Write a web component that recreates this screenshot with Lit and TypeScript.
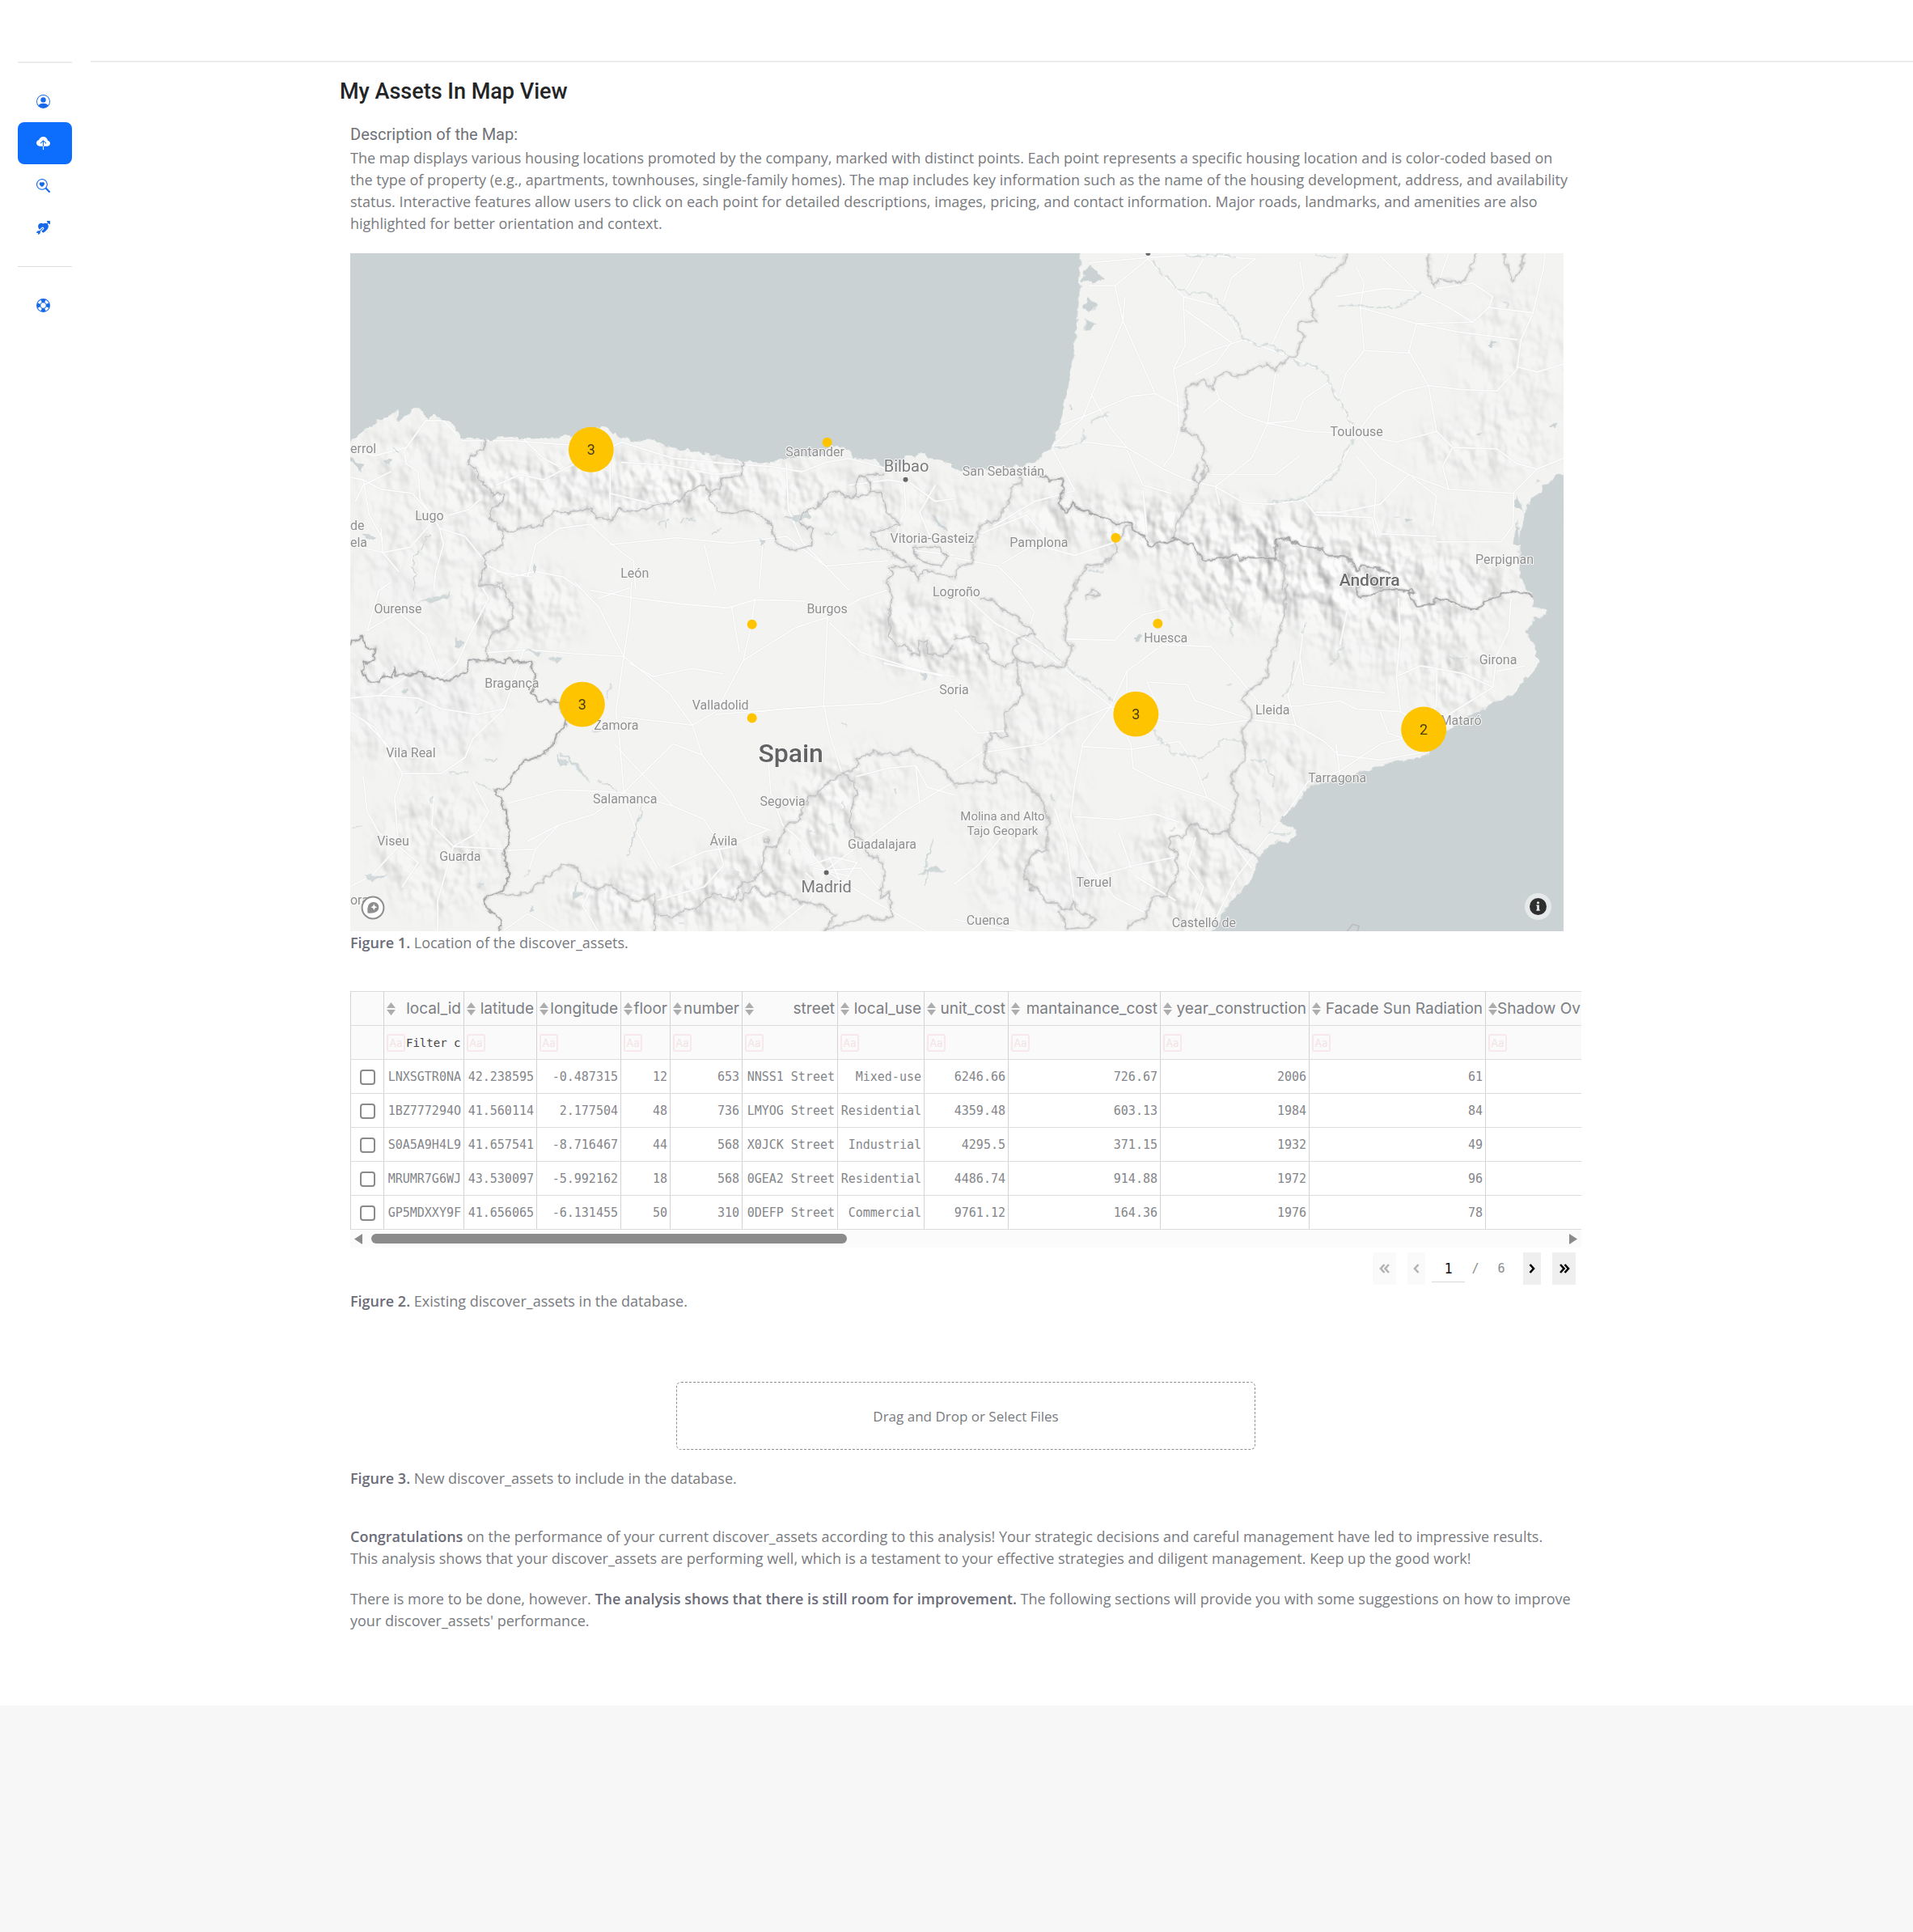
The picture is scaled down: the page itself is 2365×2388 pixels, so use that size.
import { LitElement, html, svg, css } from "lit";
import { customElement, property, state } from "lit/decorators.js";

/* ---------- icons ---------- */

const icons: Record<string, string[]> = {
  person: [
    "M11 6a3 3 0 1 1-6 0 3 3 0 0 1 6 0",
    "M0 8a8 8 0 1 1 16 0A8 8 0 0 1 0 8m8-7a7 7 0 0 0-5.468 11.37C3.242 11.226 4.805 10 8 10s4.757 1.225 5.468 2.37A7 7 0 0 0 8 1",
  ],
  upload: [
    "M8 0a5.53 5.53 0 0 0-3.594 1.342c-.766.66-1.321 1.52-1.464 2.383C1.266 4.095 0 5.555 0 7.318 0 9.366 1.708 11 3.781 11H7.5V5.707L5.354 7.854a.5.5 0 1 1-.708-.708l3-3a.5.5 0 0 1 .708 0l3 3a.5.5 0 0 1-.708.708L8.5 5.707V11h4.188C14.502 11 16 9.57 16 7.773c0-1.636-1.242-2.969-2.834-3.194C12.923 1.999 10.69 0 8 0",
    "M7.5 11h1v3.9a.5.5 0 0 1-1 0z",
  ],
  search: [
    "M6.5 4.482c1.664-1.673 5.825 1.254 0 5.018-5.825-3.764-1.664-6.69 0-5.018",
    "M13 6.5a6.47 6.47 0 0 1-1.258 3.844q.06.044.115.098l3.85 3.85a1 1 0 0 1-1.414 1.415l-3.85-3.85a1 1 0 0 1-.1-.115h.002A6.5 6.5 0 1 1 13 6.5M6.5 12a5.5 5.5 0 1 0 0-11 5.5 5.5 0 0 0 0 11",
  ],
  heart: [
    "M2.854 15.854A.5.5 0 0 1 2 15.5V14H.5a.5.5 0 0 1-.354-.854l1.5-1.5A.5.5 0 0 1 2 11.5h1.793l3.103-3.104a.5.5 0 1 1 .708.708L4.5 12.207V14a.5.5 0 0 1-.146.354zM16 3.5a.5.5 0 0 1-.854.354L14 2.707l-1.006 1.006c.236.248.44.531.6.845.562 1.096.585 2.517-.213 4.092-.793 1.563-2.395 3.288-5.105 5.08L8 13.912l-.276-.182A24 24 0 0 1 5.8 12.323L8.31 9.81a1.5 1.5 0 0 0-2.122-2.122L3.657 10.22a9 9 0 0 1-1.039-1.57c-.798-1.576-.775-2.997-.213-4.093C3.426 2.565 6.18 1.809 8 3.233c1.25-.98 2.944-.928 4.212-.152L13.292 2 12.147.854A.5.5 0 0 1 12.5 0h3a.5.5 0 0 1 .5.5z",
  ],
  help: [
    "M16 8A8 8 0 1 1 0 8a8 8 0 0 1 16 0M14.43 10.772l-2.788-1.115a4 4 0 0 1-1.985 1.985l1.115 2.788a7.03 7.03 0 0 0 3.658-3.658M5.228 14.43l1.115-2.788a4 4 0 0 1-1.985-1.985L1.57 10.772a7.03 7.03 0 0 0 3.658 3.658M14.43 5.228a7.03 7.03 0 0 0-3.658-3.658L9.657 4.358a4 4 0 0 1 1.985 1.985zM5.228 1.57A7.03 7.03 0 0 0 1.57 5.228l2.788 1.115a4 4 0 0 1 1.985-1.985zM8 11a3 3 0 1 0 0-6 3 3 0 0 0 0 6",
  ],
};

@customElement("side-nav")
class SideNav extends LitElement {
  @property() active = "upload";

  static styles = css`
    :host { display: block; box-sizing: border-box; padding: 76px 0 0 22px; }
    .rule { height: 2px; width: 67px; background: #ededee; }
    .thin { height: 1px; width: 67px; background: #dcdcde; }
    .group { display: flex; flex-direction: column; width: 67px; padding: 21px 0 22px; }
    .link {
      display: flex; align-items: center; height: 52px; padding-left: 23px;
      border-radius: 8px; color: #1769ea; box-sizing: border-box;
    }
    .link.on { background: #0d6efd; color: #fff; }
    svg { width: 17px; height: 17px; fill: currentColor; display: block; }
  `;

  private link(name: string, label: string) {
    return html`<a class="link ${name === this.active ? "on" : ""}" href="#${name}" aria-label=${label}>
      <svg viewBox="0 0 16 16" aria-hidden="true">
        ${icons[name].map((d) => svg`<path fill-rule="evenodd" d=${d}></path>`)}
      </svg>
    </a>`;
  }

  render() {
    return html`
      <div class="rule"></div>
      <nav class="group">
        ${this.link("person", "Profile")} ${this.link("upload", "My assets")}
        ${this.link("search", "Discover")} ${this.link("heart", "Match")}
      </nav>
      <div class="thin"></div>
      <nav class="group">${this.link("help", "Support")}</nav>
    `;
  }
}

/* ---------- map ---------- */

interface Tile {
  place: string;
  sea: string[];
  national: string[];
  regional: string[];
  roads: string[];
  water: string[];
}

/* Four sheets of the map, each in its own survey grid. */
const tiles: Tile[] = [
  {
    place: "translate(-13 -13) scale(.4847 .3333)",
    sea: [
      "M20 30H1580V835L1568 830 1555 815 1530 805 1500 797 1495 785 1485 783 1470 795 1445 790 1440 815 1385 828 1370 808 1345 802 1310 800 1305 775 1280 755 1262 752 1240 765 1230 785 1150 797 1130 805 1075 815 1030 812 990 800 960 790 920 778 880 770 850 768 820 740 795 730 760 735 715 725 695 700 680 678 668 690 620 700 590 720 575 712 560 720 515 730 470 725 440 722 400 722 385 730 345 725 310 725 300 700 285 670 270 655 240 638 225 655 212 630 195 612 185 630 165 645 150 665 145 650 148 618 135 635 115 650 98 655 98 675 65 690 45 720 20 748Z",
      "M20 785 38 800 42 815 60 825 55 848 38 825 20 812Z",
    ],
    national: [],
    regional: [
      "M370 730 365 765 335 795 330 820 350 840 365 900 385 915 390 945 400 925 420 930 420 950 385 995 380 1015 400 1040 415 1070 415 1125 385 1145 365 1165 370 1200 360 1250 360 1275 385 1270 425 1290",
      "M415 1060 435 1075 455 1060 520 1050 520 1030 545 995 575 1000 610 995 640 985 655 1015 690 1035 715 990 750 1000 800 975 870 960 890 930 915 905 930 895 945 925 945 950 965 1000 1010 1005 1045 990 1080 1015 1100 1050 1115 1110 1135 1130 1170 1140 1205 1120 1205 1060 1180 1050 1175 1030 1195 990 1225 970 1255 925 1315 945 1350 930 1385 925 1390 960 1395 1000 1430 1045 1390 1060 1355 1075 1370 1120 1395 1140 1440 1180 1470 1220 1475 1250 1495 1215 1530 1225 1568 1240",
      "M1030 812 1025 865 975 875 970 915 945 925",
      "M1385 860 1335 865 1315 890 1315 945M1335 865 1355 890 1352 928",
      "M1465 1130 1530 1130 1550 1165 1535 1200 1490 1185 1465 1150Z",
      "M1465 1205H1405L1410 1230 1395 1250 1405 1290",
    ],
    roads: [
      "M26 870 60 880 105 915 185 930 235 1010 255 1060 320 1090 380 1200 440 1240 500 1220 570 1240 620 1290",
      "M235 1010 205 950 200 850 170 820 165 770 220 660 265 660 300 715",
      "M310 735 440 735 580 750 690 760 720 740 850 800 990 820 1100 830 1180 850 1240 815 1300 800 1400 840",
      "M690 760 690 1030M690 930 800 970 870 965M720 815 830 825 960 860 1020 850",
      "M480 1240 500 1120 560 1060 640 1045 680 1100 720 1150 750 1180 755 1290M690 1120 860 1095 1000 1115 1140 1090 1240 1200 1300 1290",
      "M1140 820 1145 990 1180 1110 1240 1200M1440 890 1400 880 1300 900M1440 890 1445 990 1420 1080 1460 1140 1568 1160M1455 890 1520 960 1568 950",
      "M26 1120 110 1150 180 1130 240 1030M255 1060 265 1120 245 1220 240 1290M105 1060 110 1150 150 1220M26 770 90 790 170 760M60 880 75 1010 110 1100",
      "M490 1240 400 1220M930 1120 960 1290M1080 1120 1070 1290M1240 1200 1400 1180M400 900 460 860 520 880 600 820 680 800",
      "M130 850 60 900 40 960M470 730 520 800 560 830M280 1010 330 990 360 950M1520 900 1480 1000 1510 1100",
    ],
    water: [
      "M230 1085 215 1110 210 1135 190 1165 185 1200 195 1230 188 1290",
      "M815 1045 835 1035 830 1055M870 1035 900 1020 890 1035 910 1035M950 1085 975 1060",
      "M1135 1020 1170 1015 1195 1000 1200 1015 1165 1028Z",
      "M1068 1100 1088 1110 1080 1128ZM1515 1005 1518 1035 1550 1065 1530 1040",
      "M65 1085 90 1090 75 1105ZM110 810 125 825 130 810ZM136 765 148 780ZM495 1190 505 1195 495 1230ZM1235 1080 1265 1075M1325 1135 1380 1140",
    ],
  },
  {
    place: "translate(747 -13) scale(.4974 .3333)",
    sea: [
      "M-8 30H317L314 100 310 150 315 148 308 250 300 370 290 470 278 570 265 670 245 745 225 785 205 812 180 818 170 825 150 835 110 828 60 840 20 848-8 832Z",
      "M335 80 350 100 372 135 345 148 318 140ZM333 205 355 230 335 262 322 235ZM325 280 350 308 325 328Z",
      "M1525 860 1500 865 1480 885 1450 930 1425 980 1410 1040 1405 1100 1408 1240 1430 1300H1525Z",
      "M1396 935 1418 990 1392 975ZM1400 1025 1406 1120 1390 1120ZM1452 878 1458 888 1452 898ZM290 605 298 615 288 620Z",
      "M1325 375 1350 368 1340 392ZM1480 675 1500 668 1495 685ZM1125 1022 1140 1030 1130 1040ZM1297 705 1318 698 1302 712Z",
    ],
    national: [
      "M210 860 235 880 270 875 275 910 255 970 280 1000 300 960 300 985 350 1005 400 1040 440 1035 445 1065 475 1090 488 1130 510 1110 530 1115 550 1100 590 1120 625 1180 700 1160 710 1180 725 1170 800 1175 800 1100 830 1100 880 1130 915 1135 930 1165 975 1165 1005 1220 1010 1200 1045 1205 1080 1225",
    ],
    regional: [
      "M975 39 965 80 930 130 885 200 890 245 900 295 865 290 855 310 870 345 855 400 850 420 830 430 800 475 780 450 750 460 710 495 680 480 650 500 640 545 625 505 610 520 575 540 580 620 565 690 600 710 625 770 615 800 635 840 605 900 600 930 575 990 555 1040 550 1100",
      "M605 820 595 880 612 890 622 830",
      "M1180 39 1180 120 1195 160 1205 135 1265 148 1285 100 1300 39M1365 39 1375 90 1390 145 1410 90 1420 39",
      "M170 850 165 895 140 910 140 950 105 1030 65 1050 50 1115 45 1190 10 1200 0 1250",
      "M440 1040 405 1110 405 1145 370 1195 330 1205 305 1250 305 1290M800 1175 825 1200 815 1290",
    ],
    roads: [
      "M482 60 570 200 670 240 720 360 830 420 920 480 990 680 1060 800 1130 860 1230 915 1390 930 1450 840 1515 800",
      "M482 60 400 160 420 290 500 560 575 620M400 160H335M335 75 482 55 600 45 750 60M425 200 420 290 360 500 320 650 245 755",
      "M245 755 330 740 430 760 520 840 580 880 650 905 720 965 790 970 870 955 900 900 960 830 1000 710",
      "M1000 710 1050 610 1120 550 1180 530 1260 545 1350 550 1400 470 1410 360 1440 260 1465 100 1470 39",
      "M975 485 1020 400 1010 240 1020 150 1000 90M975 485 960 560M1010 240 1150 300 1290 295 1330 240 1440 260M1150 180 1230 240 1290 295M1150 180 1070 170 950 200",
      "M570 200 575 380 545 470 555 560 560 690 545 780 520 830M500 560 440 570 330 640 260 680M340 560 390 690 430 760",
      "M720 360 640 400 545 470M575 250 690 370 650 450 600 490M750 60 690 130 670 220M860 70 870 170 820 280 790 380M575 180 620 60",
      "M660 580 720 640 780 670 880 700 1000 710M800 480 780 670 740 800 650 905M650 540 660 580 620 630M930 520 870 580 850 660 780 670",
      "M1000 710 1100 740 1200 700 1240 760 1350 765 1400 820 1450 840M1180 530 1200 700M1130 400 1180 530M1020 400 1130 410 1150 300 1250 330 1400 360",
      "M1230 915 1215 830 1240 760M1130 860 1060 970 960 1000 900 1000M1140 870 1200 940 1190 1050M1000 790 1050 880 1045 1020 1060 1080 1200 1090",
      "M650 905 660 970M640 860 720 860 800 860 860 790M870 955 900 1010 1040 1020 1050 1090M1200 1110H1360L1390 1050 1392 930",
      "M1060 50 1110 120 1150 180M1230 39 1200 170 1290 150 1340 200 1330 240M120 1190 200 1120 300 1160 405 1110M65 1080 180 1010 230 1100M0 1170 110 1200 170 1290",
      "M245 765 300 920 200 960 100 1050M430 770 470 900 540 930M1515 450 1450 480 1400 460M470 920 480 1080",
    ],
    water: [
      "M495 70 510 105 540 140 550 165 580 190 620 185 650 210 680 260 705 290 715 340 740 375 790 385 820 410 860 450 900 455 930 500 945 560 970 620 990 680",
      "M995 730 970 780 955 850 910 905 880 940 850 950 790 965M955 235 990 232 1050 240 1090 240 1130 220 1160 185",
      "M575 42 600 50 640 45 700 50M900 45 950 55M250 760 295 755 325 725 320 690M340 665 385 630",
      "M1365 220 1380 225 1375 240M335 1218H370M1095 1020H1105",
    ],
  },
  {
    place: "translate(-13 407) scale(.4847 .3333)",
    sea: [],
    national: [
      "M26 230 60 200 65 235 90 250 85 290 60 300 58 330 75 370 100 370 115 345 135 350 140 315 145 345 215 335 220 355 250 350 265 370 300 350 325 335 330 285 350 295 380 290 425 300 430 282 460 300 490 295 495 345 500 375 490 410 510 448 520 438 560 445 575 500 580 515 550 580 545 605 515 645 470 660 440 720 435 740 415 770 395 768 425 850 430 950 420 1010 430 1080 430 1110 410 1150 370 1170 375 1210 395 1235 410 1255 408 1297",
    ],
    regional: [
      "M360 10 385 12 415 5 425 45 445 100 430 165 395 185 370 240 380 290",
      "M405 1160 430 1165 490 1150 495 1130 540 1080 580 1045 605 1060 620 1110 660 1145 690 1115 700 1140 760 1185 805 1160 805 1230 850 1245 880 1215 910 1215 950 1155 1010 1180 1025 1115 1045 1115 1080 1070 1085 980 1115 985 1145 890 1170 890 1195 800 1220 785 1250 735 1285 705 1320 685 1320 655 1365 630 1410 640 1455 620 1470 640 1520 665 1568 745",
      "M805 1230V1297M1020 1180 1060 1130 1080 1160 1130 1150 1170 1180 1240 1205 1265 1240 1235 1297",
      "M1285 705 1310 740 1320 780 1300 890 1315 940 1335 960 1350 1015 1375 1020 1390 1080 1380 1170 1400 1150 1410 1240 1385 1255 1340 1240 1300 1260 1240 1290",
      "M1085 955 1095 950 1095 965 1083 965Z",
      "M1395 0 1410 60 1400 130 1405 200 1420 230 1445 235 1460 270 1480 265 1480 220 1500 215 1500 265 1540 275 1568 240",
    ],
    roads: [
      "M745 0 740 130 725 275 705 480 715 600 725 780 650 860 560 900 500 990 480 1080",
      "M600 0 660 90 725 275 840 410 900 530 925 640 1000 780 1040 890 1100 920M380 260 480 250 600 265 725 275",
      "M1060 60 1050 160 1030 290 960 480 900 530 720 500M1000 90 1020 260M1245 130 1235 450 1250 560 1280 700",
      "M1030 290 1160 170 1245 130 1330 60 1395 30M1235 460 960 490M1235 460 1380 450 1500 400 1568 370M640 30 760 60 870 80 990 95 1060 65 1190 70",
      "M725 780 850 830 930 880 960 950 1010 970 1090 920M725 780 850 600 925 640M725 800 760 930 810 1060M1010 980 930 1000 840 1060M430 820 560 770 650 775 725 780",
      "M26 480 90 540 160 710 140 800 150 980 200 1040 160 1130M160 710 260 710 320 650 340 580 420 470 470 250M160 710 120 600 60 510",
      "M260 350 220 200 150 110 70 180 100 30 130 0M260 350 300 300 330 200 380 60 360 10M100 420 200 430 260 470 350 490 420 470M26 430 100 420 170 350",
      "M240 800 235 900 290 980 420 990M150 980 80 1090 26 1130M290 980 250 1180 250 1297M340 740 380 850 350 930 290 980M60 720 70 850 100 930 150 980",
      "M660 60 700 40 740 20M960 950 980 1050 930 1130 810 1180M500 990 430 995M740 300 800 350 900 320 980 340M850 830 700 600M1070 480 1130 470 1235 460",
      "M1240 1070 1170 950 1130 900 1100 780 1090 590M1240 1070 1350 950 1440 850 1568 740M1240 1070 1200 1180 1100 1297M1240 1070 1360 1180 1500 1297M1240 1070 1330 1060 1390 1160",
      "M1200 1050 1260 1020 1320 1040 1290 1110 1230 1130 1190 1080M1210 1060 1300 1090M1250 1020 1280 1120M1320 720 1400 690 1470 680 1500 760 1568 790M1470 680 1480 820",
      "M1390 300 1480 330 1568 350M1250 150 1330 260 1440 310 1540 350M560 900 480 960M420 1290 480 1230 560 1297M660 1297 620 1200 640 1140",
    ],
    water: [
      "M205 70 240 75 275 55 280 40M365 115 370 150M298 215 315 222 300 238ZM475 250 500 262 512 255 505 275M535 280 565 285 555 300M560 630 590 665 615 690 620 710 635 740M555 640 565 680 580 670",
      "M660 740 690 755 705 770M770 830 765 880 755 905 748 965 735 1015M690 375 680 430M645 552H668M605 1115 600 1145 615 1160 598 1175Z",
      "M1480 340H1500L1492 362ZM1515 960 1500 1010 1495 1060M1480 1080 1510 1060 1545 1070M1500 1065 1495 1125M1218 990V1020M1145 990 1152 1010",
      "M155 405 175 395 165 415ZM370 660 405 655M280 710 330 705M350 740 385 770M30 910 55 905M65 1090 80 1110 120 1085M350 1130 365 1120M470 1090 488 1070M1280 518 1295 540M195 485 212 460M490 1205 500 1215 487 1228Z",
      "M1250 895 1265 905M1195 925 1215 920M1285 815 1280 845M1005 1065 1018 1080M865 1265 880 1275M1415 765 1422 785M235 795V815",
    ],
  },
  {
    place: "translate(747 407) scale(.4974 .3333)",
    sea: [
      "M1432-10 1440 40 1438 90 1475 105 1470 125 1445 135 1425 170 1425 205 1445 230 1452 300 1440 345 1420 355 1405 390 1385 420 1350 440 1300 480 1240 530 1215 560 1200 610 1170 645 1100 665 1040 690 1000 710 900 750 875 770 840 840 808 885 828 895 850 935 835 960 785 975 760 1020 755 1050 735 1110 700 1170 675 1210 650 1270 636 1305H1525V-10Z",
      "M447 205 465 195 460 220 450 222Z",
    ],
    national: ["M1000 20 1005 50 1035 50 1070 25 1130 30 1150 90 1195 80 1200 60 1240 70 1280 100 1310 95 1320 70 1385 35 1440 50M1130 40 1142 38 1138 22 1130 30"],
    regional: [
      "M0 205 50 205 55 225 80 230 90 290 125 315 155 285 145 245 165 205 200 190 155 130 130 110 95 65 65 60",
      "M300 0 300 30 275 100 280 130 272 205 295 240 270 315 210 310 155 285 160 370 175 420 125 485 130 575 90 560 90 590 75 610 80 690 105 710 105 745 60 740 0 750",
      "M105 710 125 700 180 745 215 800 235 880 230 1000 200 995 170 1085 235 1190 260 1190 265 1215 290 1210 297 1185 305 1215 350 1250 335 1280 285 1285 260 1220",
      "M825 0 820 120 800 240 780 290 780 350 735 400 715 440 740 480 740 510 715 550 725 600 720 665 690 710 690 750 705 780 695 870 680 920 640 940 630 920 590 895 570 945 540 950 535 985 555 1000 555 1080 550 1110 535 1130 530 1165 495 1170 475 1250 435 1265 430 1290",
      "M680 920 700 965 760 1020M330 60 345 25 360 45ZM192 1130 196 1145 190 1140Z",
    ],
    roads: [
      "M0 10 100 150 200 230 290 340 390 460 440 600 445 690 510 740 630 800 690 850",
      "M390 460 520 515 640 530 740 510 850 530 920 590 955 640 1060 660 1170 630",
      "M390 460 430 330 520 230 640 240 700 340 760 450 850 460 960 440 1000 470 1110 480 1170 530",
      "M390 460 320 600 300 750 290 870 310 960 350 1080 400 1170 480 1230M390 460 280 530 220 600 80 630",
      "M320 610 440 620 560 590 600 680 630 800M300 870 410 880 500 860 560 890M350 1090 450 1050 550 1020M410 930 440 1060",
      "M1340 390 1220 500 1170 560 1060 600 960 700 880 740 830 850 770 960 700 1100 640 1280M1340 390 1350 270 1380 180 1385 60",
      "M950 600 960 720M1110 480 1100 350 1110 200 1105 60M1340 390 1270 340 1200 320 1160 310 1100 350M1200 320 1200 440 1190 520M1060 480 1080 560 1140 590",
      "M270 210 400 215 440 150 470 120 530 100M160 30 200 110 180 200M480 370 580 380 600 440 740 510M430 330 430 430M480 370 500 440",
      "M870 150 860 280 870 380 1070 410M960 230 980 90M850 530 830 420 860 290M600 950 580 1050 620 1130 600 1220M690 960 740 1060M450 1090 550 1180",
      "M1350 330 1420 310M0 470 60 560 130 550M0 700 60 640 80 620M0 1120 60 1050 120 940 180 920M0 1250 60 1270 180 1297M250 840 280 970 300 1200",
    ],
    water: [
      "M200 195 230 250 270 290 290 325 340 375 370 410 395 445M500 550 515 600 535 605 540 635 580 640 620 655 640 620 660 610 665 580 720 590",
      "M740 660 775 665 780 700 795 720 790 760M755 810 765 905M670 70 685 110 690 180 695 205M845 300 840 380 815 430M790 270 780 300",
      "M875 150 865 185M965 240 955 280 935 305M1230 270 1245 290 1275 280M675 385 690 380M620 730 630 715M165 655 175 670M240 790 252 808M535 918 548 908M795 965 805 960",
      "M978 1297 990 1270 1005 1275 1005 1297",
      "M780 930 815 935 838 928",
    ],
  },
];

/* Mountain areas: centre x, centre y, radius x, radius y, strength. */
const ranges: number[][] = [
  [300, 290, 190, 40, 0.9], [470, 285, 120, 38, 0.7], [120, 300, 110, 80, 0.35], [640, 310, 110, 45, 0.5],
  [800, 320, 90, 40, 0.4], [940, 330, 110, 40, 0.6], [1060, 345, 130, 36, 1], [1190, 385, 130, 50, 1],
  [1120, 420, 130, 45, 0.8], [1310, 410, 130, 50, 0.9], [1300, 480, 120, 50, 0.6], [1230, 325, 160, 20, 0.35],
  [1400, 240, 90, 40, 0.5], [1440, 130, 70, 90, 0.35], [710, 470, 80, 50, 0.8], [790, 500, 70, 40, 0.5],
  [210, 440, 80, 50, 0.7], [90, 400, 90, 60, 0.3], [80, 560, 110, 80, 0.45], [110, 740, 80, 80, 0.55],
  [400, 800, 150, 35, 0.95], [510, 760, 90, 30, 0.7], [590, 690, 50, 60, 0.8], [640, 650, 60, 40, 0.4],
  [830, 680, 80, 90, 0.35], [860, 780, 90, 60, 0.45], [1040, 760, 70, 80, 0.7], [1150, 640, 50, 60, 0.5],
  [1370, 540, 50, 40, 0.6], [850, 570, 60, 50, 0.4], [60, 230, 60, 30, 0.3],
];

/* Place names: text, centre x, baseline y. */
const towns: [string, number, number][] = [
  ["Lugo", 98, 330], ["León", 352, 401], ["Santander", 575, 251], ["Vitoria-Gasteiz", 720, 358],
  ["San Sebastián", 808, 275], ["Toulouse", 1245, 226], ["Pamplona", 852, 363], ["Perpignan", 1428, 384],
  ["Logroño", 750, 424], ["Ourense", 59, 445], ["Burgos", 590, 445], ["Bragança", 200, 537],
  ["Valladolid", 458, 564], ["Zamora", 329, 589], ["Soria", 747, 545], ["Vila Real", 75, 623],
  ["Salamanca", 340, 680], ["Segovia", 535, 683], ["Viseu", 53, 732], ["Guarda", 136, 752],
  ["Ávila", 462, 732], ["Guadalajara", 658, 736], ["Huesca", 1009, 481], ["Girona", 1420, 508],
  ["Lleida", 1141, 570], ["Mataró", 1374, 583], ["Tarragona", 1221, 654], ["Teruel", 920, 784],
  ["Cuenca", 789, 831], ["Castelló de", 1056, 834],
];
const cutNames: [string, number][] = [["errol", 247], ["de", 342], ["ela", 363], ["ora", 806]];

const clusters: [number, number, number][] = [[298, 243, 3], [287, 558, 3], [972, 570, 3], [1328, 589, 2]];
const points: [number, number][] = [[590, 234], [947, 352], [497, 459], [497, 575], [999, 458]];

@customElement("asset-map")
class AssetMap extends LitElement {
  static styles = css`
    :host { display: block; position: relative; }
    .map { display: block; width: 100%; height: auto; background: #f3f3f2; font-family: Roboto, "Liberation Sans", sans-serif; }
    .map path { vector-effect: non-scaling-stroke; stroke-linejoin: round; stroke-linecap: round; }
    .sea { fill: #cad2d3; }
    .glow { fill: none; stroke: #dddddd; stroke-width: 6; opacity: 0.45; }
    .national { fill: none; stroke: #a2a2a4; stroke-width: 2; }
    .regional { fill: none; stroke: #bdbdbf; stroke-width: 1.6; }
    .casing { fill: none; stroke: #e7e9e9; stroke-width: 3; opacity: 0.7; }
    .road { fill: none; stroke: #fdfdfd; stroke-width: 1.6; }
    .water { fill: #c9d2d3; fill-opacity: 0.8; stroke: #c9d2d3; stroke-width: 1.3; }
    .river { fill: none; stroke: #ccd5d5; stroke-width: 1.4; stroke-dasharray: 7 2 12 3; }
    .town, .city, .land, .park {
      text-anchor: middle; fill: #909092; font-size: 16px;
      stroke: #f8f8f7; stroke-width: 2px; paint-order: stroke; stroke-linejoin: round;
    }
    .cut { text-anchor: start; }
    .park { font-size: 15px; }
    .city { font-size: 20px; fill: #7b7b7d; }
    .land { font-size: 21px; font-weight: 500; fill: #6c6c6e; }
    .big { font-size: 32px; fill: #626264; }
    .dot { fill: #666; }
    .pin { fill: #ffc400; }
    .count { text-anchor: middle; font-size: 18px; fill: #4a3d10; }
    .about {
      position: absolute; right: 15px; bottom: 14px; width: 33px; height: 33px; padding: 0;
      border: 0; border-radius: 50%; background: #e5e9e9; display: grid; place-items: center;
    }
    .brand { position: absolute; left: 13px; bottom: 14px; width: 30px; height: 30px; }
    .about svg, .brand svg { display: block; }
  `;

  render() {
    return html`
      <svg class="map" viewBox="0 0 1501 839" role="img" aria-label="Map of asset locations">
        <defs>
          <filter id="relief" x="0" y="0" width="1501" height="839" filterUnits="userSpaceOnUse" color-interpolation-filters="sRGB">
            <feGaussianBlur in="SourceAlpha" stdDeviation="14" result="area"></feGaussianBlur>
            <feTurbulence type="fractalNoise" baseFrequency=".036 .026" numOctaves="3" seed="8" result="heights"></feTurbulence>
            <feDiffuseLighting in="heights" surfaceScale="5" diffuseConstant="1.13" lighting-color="#ffffff" result="shade">
              <feDistantLight azimuth="315" elevation="55"></feDistantLight>
            </feDiffuseLighting>
            <feComposite in="shade" in2="area" operator="in"></feComposite>
          </filter>
          <filter id="rough" x="0" y="0" width="1501" height="839" filterUnits="userSpaceOnUse">
            <feTurbulence type="fractalNoise" baseFrequency=".11" numOctaves="2" seed="3"></feTurbulence>
            <feDisplacementMap in="SourceGraphic" scale="9" xChannelSelector="R" yChannelSelector="G"></feDisplacementMap>
          </filter>
        </defs>
        <g filter="url(#relief)">
          ${ranges.map(([x, y, rx, ry, o]) => svg`<ellipse cx=${x} cy=${y} rx=${rx} ry=${ry} fill-opacity=${o * 0.5}></ellipse>`)}
        </g>
        ${tiles.map((t) => svg`<g transform=${t.place}>
          ${t.roads.map((d) => svg`<path class="casing" d=${d}></path>`)}
          ${t.roads.map((d) => svg`<path class="road" d=${d}></path>`)}
        </g>`)}
        <g filter="url(#rough)">
          ${tiles.map((t) => svg`<g transform=${t.place}>
            ${t.water.map((d) => svg`<path class=${d.includes("Z") ? "water" : "river"} d=${d}></path>`)}
            ${[...t.national, ...t.regional].map((d) => svg`<path class="glow" d=${d}></path>`)}
            ${t.regional.map((d) => svg`<path class="regional" d=${d}></path>`)}
            ${t.national.map((d) => svg`<path class="national" d=${d}></path>`)}
          </g>`)}
        </g>
        <g filter="url(#rough)">
          ${tiles.map((t) => svg`<g transform=${t.place}>${t.sea.map((d) => svg`<path class="sea" d=${d}></path>`)}</g>`)}
        </g>
        <path class="sea" d="M0 0H900V60L893 120 885 180 700 200 400 190 0 170Z"></path>
        <path class="sea" d="M1501 300V839H1120L1200 740 1280 675 1380 615 1496 480Z"></path>
        <path class="regional" d="M1233 839 1240 830 1248 832 1246 839"></path>

        ${towns.map(([name, x, y]) => svg`<text class="town" x=${x} y=${y}>${name}</text>`)}
        ${cutNames.map(([name, y]) => svg`<text class="town cut" x="0" y=${y}>${name}</text>`)}
        <text class="park" x="807" y="701">Molina and Alto</text>
        <text class="park" x="807" y="719">Tajo Geopark</text>
        <text class="city" x="688" y="270">Bilbao</text>
        <text class="city" x="589" y="791">Madrid</text>
        <text class="land" x="1261" y="411">Andorra</text>
        <text class="land big" x="545" y="629">Spain</text>
        <circle class="dot" cx="687" cy="280" r="3"></circle>
        <circle class="dot" cx="589" cy="766" r="3"></circle>
        <circle class="dot" cx="987" cy="0" r="3"></circle>

        ${points.map(([x, y]) => svg`<circle class="pin" cx=${x} cy=${y} r="6"></circle>`)}
        ${clusters.map(([x, y, n]) => svg`<circle class="pin" cx=${x} cy=${y} r="28"></circle>
          <text class="count" x=${x} y=${y + 6}>${n}</text>`)}
      </svg>
      <a class="brand" href="#map" aria-label="Map provider">
        <svg width="30" height="30" viewBox="0 0 30 30" aria-hidden="true">
          <circle cx="15" cy="15" r="13.4" fill="#fff" stroke="#8e8e8e" stroke-width="2"></circle>
          <path d="M8.5 21.5C7.600 13 10 8 16 8a6.300 6.300 0 0 1 6.300 6.300C22.300 20 17 22.400 8.500 21.500Z" fill="#8e8e8e"></path>
          <path d="m16.300 10.300 1.200 2.700 2.700 1.200-2.700 1.200-1.200 2.700-1.200-2.700-2.700-1.200 2.700-1.200z" fill="#fff"></path>
        </svg>
      </a>
      <button class="about" aria-label="Map attribution">
        <svg width="21" height="21" viewBox="0 0 20 20" aria-hidden="true">
          <path fill="#2f2f2f" fill-rule="evenodd" d="M0 10a10 10 0 1 0 20 0 10 10 0 1 0-20 0m10-6a1.500 1.500 0 1 1 0 3 1.500 1.500 0 0 1 0-3M8 8h3.300v5.500H12V15H8v-1.500h.700v-4H8z"></path>
        </svg>
      </button>
    `;
  }
}

/* ---------- table ---------- */

const columns: [string, number][] = [
  ["local_id", 99], ["latitude", 90], ["longitude", 104], ["floor", 61], ["number", 89], ["street", 118],
  ["local_use", 107], ["unit_cost", 104], ["mantainance_cost", 188], ["year_construction", 184],
  ["Facade Sun Radiation", 218], ["Shadow Ov", 0],
];

const rows: string[][] = [
  ["LNXSGTR0NA", "42.238595", "-0.487315", "12", "653", "NNSS1 Street", "Mixed-use", "6246.66", "726.67", "2006", "61", ""],
  ["1BZ777294O", "41.560114", "2.177504", "48", "736", "LMYOG Street", "Residential", "4359.48", "603.13", "1984", "84", ""],
  ["S0A5A9H4L9", "41.657541", "-8.716467", "44", "568", "X0JCK Street", "Industrial", "4295.5", "371.15", "1932", "49", ""],
  ["MRUMR7G6WJ", "43.530097", "-5.992162", "18", "568", "0GEA2 Street", "Residential", "4486.74", "914.88", "1972", "96", ""],
  ["GP5MDXXY9F", "41.656065", "-6.131455", "50", "310", "0DEFP Street", "Commercial", "9761.12", "164.36", "1976", "78", ""],
];

@customElement("asset-table")
class AssetTable extends LitElement {
  @state() private page = 1;

  static styles = css`
    :host { display: block; }
    .grid { width: 100%; table-layout: fixed; border-collapse: collapse; border-top: 1px solid #dcdcde; }
    .pick { width: 41px; }
    th, td {
      box-sizing: border-box; height: 42px; padding: 0 3px; border-bottom: 1px solid #dcdcde;
      border-left: 1px solid #d3d3d5; overflow: hidden; white-space: nowrap;
    }
    th { background: #fafafa; font-weight: 400; }
    th:last-child { padding-right: 0; }
    .head { display: flex; align-items: center; justify-content: space-between; color: #7c7e84; font: 19px/24px Inter, "Liberation Sans", sans-serif; }
    .head.start { justify-content: flex-start; }
    .sort { flex: none; width: 11px; height: 16px; padding: 0; border: 0; background: none; display: block; }
    .sort svg { display: block; }
    .filter { display: flex; align-items: center; }
    .case {
      flex: none; box-sizing: border-box; width: 23px; height: 22px; padding: 0; border: 2px solid #f8e8eb; border-radius: 3px;
      background: none; color: #f4e3e6; font: 13px/16px Inter, "Liberation Sans", sans-serif;
    }
    .query { flex: 1; min-width: 0; width: 0; padding: 0 0 0 1px; border: 0; background: none; font: 14px/20px "DejaVu Sans Mono", monospace; color: #444; outline: none; }
    .query::placeholder { color: #444; opacity: 1; }
    td { text-align: right; color: #84868a; font: 15px/20px "DejaVu Sans Mono", monospace; }
    .tick { text-align: center; padding: 0; }
    .tick input { appearance: none; display: inline-block; vertical-align: middle; box-sizing: border-box; width: 19px; height: 19px; margin: 0; border: 2px solid #8a8a8a; border-radius: 4px; background: #fff; }
    .scroll { display: flex; align-items: center; gap: 10px; height: 22px; padding: 0 5px; background: #fbfbfb; }
    .track { flex: 1; height: 12px; }
    .thumb { width: 40%; height: 12px; border-radius: 6px; background: #8b8b8b; }
    .arrow { width: 11px; height: 13px; padding: 0; border: 0; background: none; }
    .arrow svg { display: block; }
    .pager { display: flex; justify-content: flex-end; align-items: center; gap: 14px; padding: 6px 7px 0 0; color: #8a8c90; font: 15px/20px "DejaVu Sans Mono", monospace; }
    .step { display: grid; place-items: center; width: 22px; height: 40px; padding: 0; border: 0; background: #efefef; color: #000; }
    .wide { width: 29px; }
    .step:disabled { background: #fafafa; color: #b3b3b3; }
    .group { display: flex; align-items: center; gap: 8px; }
    .place { display: flex; align-items: center; width: 105px; }
    .number { box-sizing: border-box; width: 41px; height: 33px; padding: 0; border: 0; border-bottom: 1px solid #d8d8d8; text-align: center; color: #111; background: none; font: 17px/20px "DejaVu Sans Mono", monospace; }
    .slash { width: 26px; text-align: center; }
    .total { width: 38px; text-align: center; }
  `;

  private chevrons(d: string) {
    return html`<svg width="14" height="14" viewBox="0 0 14 14" fill="none" stroke="currentColor" stroke-width="2.6" aria-hidden="true"><path d=${d}></path></svg>`;
  }

  render() {
    return html`
      <table class="grid">
        <colgroup>
          <col class="pick" />
          ${columns.map(([, w]) => html`<col style=${w ? `width:${w}px` : ""} />`)}
        </colgroup>
        <thead>
          <tr>
            <th></th>
            ${columns.map(([name, w]) => html`<th scope="col">
              <div class="head ${w ? "" : "start"}">
                <button class="sort" aria-label="Sort by ${name}">
                  <svg width="11" height="16" viewBox="0 0 11 16" aria-hidden="true"><path fill="#adadad" d="M5.500 0 11 7H0zM0 9h11l-5.500 7z"></path></svg>
                </button>
                <span>${name}</span>
              </div>
            </th>`)}
          </tr>
          <tr>
            <th></th>
            ${columns.map(([name], i) => html`<th>
              <div class="filter">
                <button class="case" aria-label="Toggle case for ${name}">Aa</button>
                <input class="query" type="text" aria-label="Filter ${name}" placeholder=${i === 0 ? "Filter column" : ""} />
              </div>
            </th>`)}
          </tr>
        </thead>
        <tbody>
          ${rows.map((r) => html`<tr>
            <td class="tick"><input type="checkbox" aria-label="Select ${r[0]}" /></td>
            ${r.map((c) => html`<td>${c}</td>`)}
          </tr>`)}
        </tbody>
      </table>
      <div class="scroll">
        <button class="arrow" aria-label="Scroll left"><svg width="11" height="13" viewBox="0 0 11 13" aria-hidden="true"><path fill="#8b8b8b" d="M10 0v13L0 6.500z"></path></svg></button>
        <div class="track"><div class="thumb"></div></div>
        <button class="arrow" aria-label="Scroll right"><svg width="11" height="13" viewBox="0 0 11 13" aria-hidden="true"><path fill="#8b8b8b" d="M1 0v13l10-6.500z"></path></svg></button>
      </div>
      <div class="pager">
        <button class="step wide" aria-label="First page" disabled>${this.chevrons("M6.500 2 2 7l4.500 5M12 2 7.500 7l4.500 5")}</button>
        <div class="group">
          <button class="step" aria-label="Previous page" disabled>${this.chevrons("M9.500 2 5 7l4.500 5")}</button>
          <div class="place">
            <input class="number" type="text" aria-label="Page" .value=${String(this.page)} />
            <span class="slash">/</span><span class="total">6</span>
          </div>
          <button class="step" aria-label="Next page" @click=${() => (this.page = Math.min(6, this.page + 1))}>${this.chevrons("M4.500 2 9 7l-4.500 5")}</button>
        </div>
        <button class="step wide" aria-label="Last page" @click=${() => (this.page = 6)}>${this.chevrons("M2 2l4.500 5L2 12M7.500 2 12 7l-4.500 5")}</button>
      </div>
    `;
  }
}

/* ---------- page ---------- */

@customElement("app-root")
class AppRoot extends LitElement {
  static styles = css`
    :host { display: block; min-height: 100vh; background: #f7f7f7; }
    .page { display: flex; background: #fff; color: #797b80; font: 18px/27px "Open Sans", "Liberation Sans", sans-serif; }
    .side { flex: none; width: 112px; }
    .main { flex: 1; min-width: 0; }
    .top { height: 75px; border-bottom: 2px solid #ededee; }
    .content { padding: 18px 397px 91px 308px; }
    h1 { margin: 0; color: #222425; font: 500 27px/36px Roboto, "Liberation Sans", sans-serif; }
    .body { padding: 22px 13px 0; }
    h2 { margin: 0 0 2px; color: #707278; font: 400 20px/27px Roboto, "Liberation Sans", sans-serif; }
    p { margin: 0; padding-right: 12px; }
    strong { font-weight: 600; color: #6b6c78; }
    figure { margin: 0; }
    .located { padding-top: 23px; }
    .located asset-map { margin-right: 22px; }
    .located figcaption { padding-top: 1px; }
    .existing { padding-top: 46px; }
    .existing figcaption { padding-top: 7px; }
    .fresh { padding-top: 86px; }
    .drop {
      display: grid; place-items: center; box-sizing: border-box; width: 47%; height: 84px; margin: 0 auto;
      border: 1px dashed #8f8f8f; border-radius: 6px; font-size: 17px;
    }
    .file { position: absolute; width: 1px; height: 1px; opacity: 0; }
    .fresh figcaption { padding-top: 22px; }
    .note { padding-top: 45px; }
    .note p + p { padding-top: 23px; }
  `;

  render() {
    return html`
      <div class="page">
        <side-nav class="side"></side-nav>
        <div class="main">
          <header class="top"></header>
          <main class="content">
            <h1>My Assets In Map View</h1>
            <div class="body">
              <h2>Description of the Map:</h2>
              <p>The map displays various housing locations promoted by the company, marked with distinct points. Each point represents a specific housing location and is color-coded based on the type of property (e.g., apartments, townhouses, single-family homes). The map includes key information such as the name of the housing development, address, and availability status. Interactive features allow users to click on each point for detailed descriptions, images, pricing, and contact information. Major roads, landmarks, and amenities are also highlighted for better orientation and context.</p>
              <figure class="located">
                <asset-map></asset-map>
                <figcaption><strong>Figure 1.</strong> Location of the discover_assets.</figcaption>
              </figure>
              <figure class="existing">
                <asset-table></asset-table>
                <figcaption><strong>Figure 2.</strong> Existing discover_assets in the database.</figcaption>
              </figure>
              <figure class="fresh">
                <label class="drop" for="files">Drag and Drop or Select Files<input class="file" id="files" type="file" multiple /></label>
                <figcaption><strong>Figure 3.</strong> New discover_assets to include in the database.</figcaption>
              </figure>
              <section class="note">
                <p><strong>Congratulations</strong> on the performance of your current discover_assets according to this analysis! Your strategic decisions and careful management have led to impressive results. This analysis shows that your discover_assets are performing well, which is a testament to your effective strategies and diligent management. Keep up the good work!</p>
                <p>There is more to be done, however. <strong>The analysis shows that there is still room for improvement.</strong> The following sections will provide you with some suggestions on how to improve your discover_assets' performance.</p>
              </section>
            </div>
          </main>
        </div>
      </div>
    `;
  }
}
